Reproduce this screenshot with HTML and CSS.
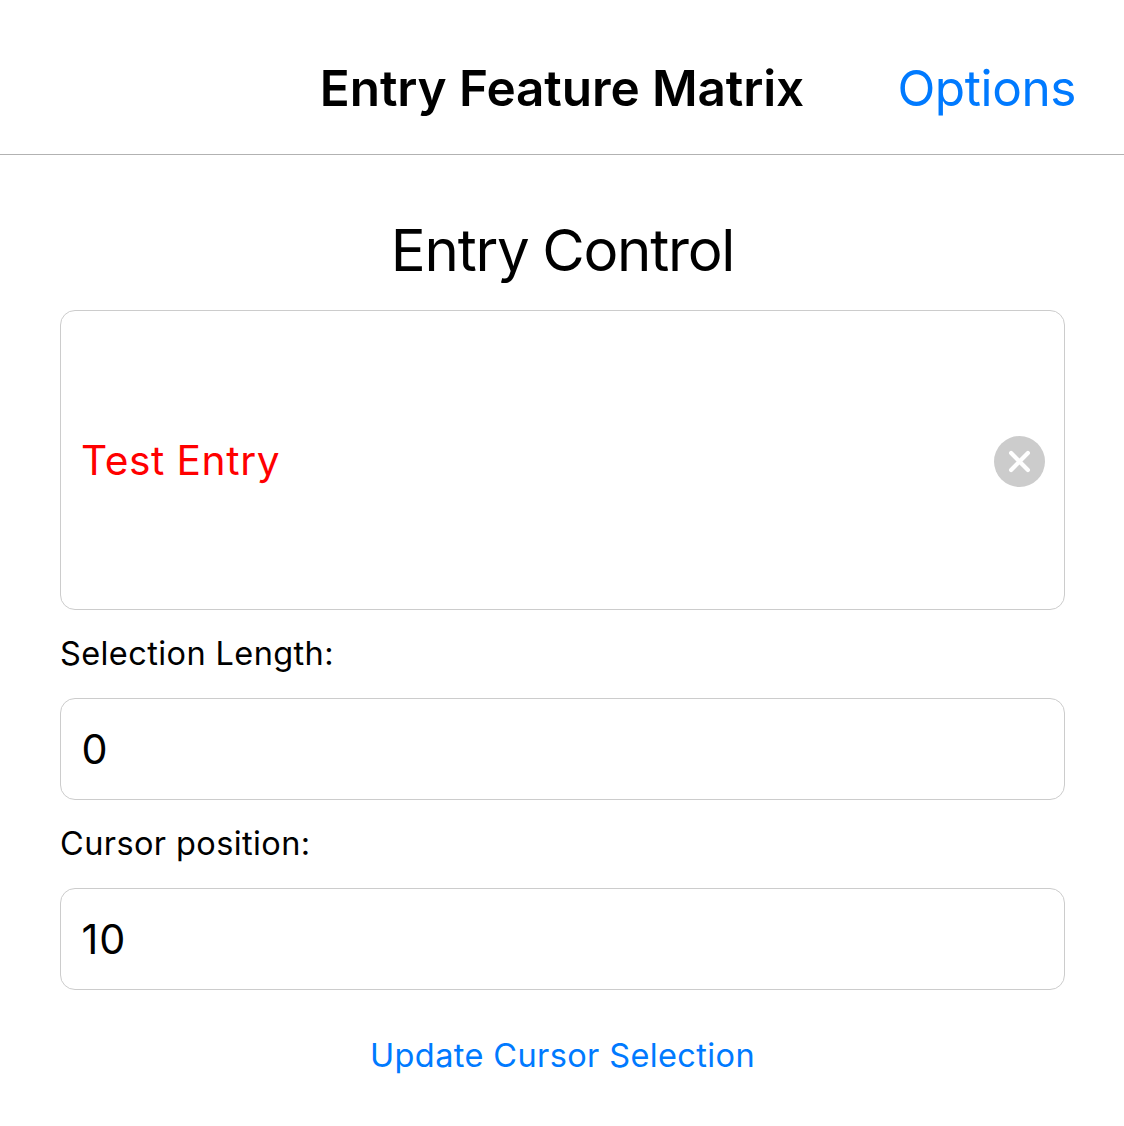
FILE: index.html
```html
<!DOCTYPE html>
<html lang="en">
<head>
<meta charset="utf-8">
<title>Entry Feature Matrix</title>
<link rel="stylesheet" href="styles.css">
</head>
<body>
<header class="navbar">
  <h1 class="navbar-title">Entry Feature Matrix</h1>
  <a class="navbar-action">Options</a>
</header>
<main class="content">
  <h2 class="heading">Entry Control</h2>
  <div class="entry entry-large">
    <span class="entry-test">Test Entry</span>
    <svg class="clear" viewBox="0 0 51 51" aria-label="Clear"><circle cx="25.5" cy="25.5" r="25.5" fill="#ccc"/><path d="M17.1 17.1l16.8 16.8M33.9 17.1l-16.8 16.8" stroke="#fff" stroke-width="4.2" stroke-linecap="round"/></svg>
  </div>
  <div class="label">Selection Length:</div>
  <div class="entry"><span class="value">0</span></div>
  <div class="label">Cursor position:</div>
  <div class="entry"><span class="value">10</span></div>
  <div class="update">Update Cursor Selection</div>
</main>
</body>
</html>
```
FILE: styles.css
```css
* { box-sizing: border-box; }
body { margin: 0; background: #fff; color: #000; font-family: Inter, sans-serif; width: 1124px; height: 1126px; overflow: hidden; }
h1, h2 { margin: 0; }
.navbar { height: 155px; border-bottom: 1px solid #b2b2b2; display: grid; grid-template-columns: 1fr auto 1fr; align-items: center; padding: 22px 48px 0; }
.navbar-title { grid-column: 2; font-size: 49.5px; font-weight: 600; letter-spacing: -0.1px; line-height: 62px; white-space: nowrap; }
.navbar-action { justify-self: end; font-size: 49.5px; line-height: 62px; letter-spacing: -0.4px; color: #007aff; }
.content { padding: 60px 59px 0 60px; }
.heading { height: 95px; font-size: 58.2px; font-weight: 400; line-height: 70px; letter-spacing: -1.25px; word-spacing: -1.5px; text-align: center; }
.entry { height: 102px; border: 1px solid #ccc; border-radius: 15px; display: flex; align-items: center; justify-content: space-between; padding: 0 19px 0 20px; }
.entry-large { height: 300px; }
.entry-test { color: #f00; font-size: 40.7px; letter-spacing: 0.6px; word-spacing: -0.5px; }
.clear { width: 51px; height: 51px; margin-top: 2px; }
.label { height: 88px; line-height: 88px; font-size: 32.5px; letter-spacing: 0.4px; }
.value { font-size: 41.3px; letter-spacing: 1px; padding-left: 0.5px; }
.update { height: 132px; line-height: 132px; text-align: center; font-size: 32.5px; letter-spacing: 0.38px; color: #007aff; }
```
